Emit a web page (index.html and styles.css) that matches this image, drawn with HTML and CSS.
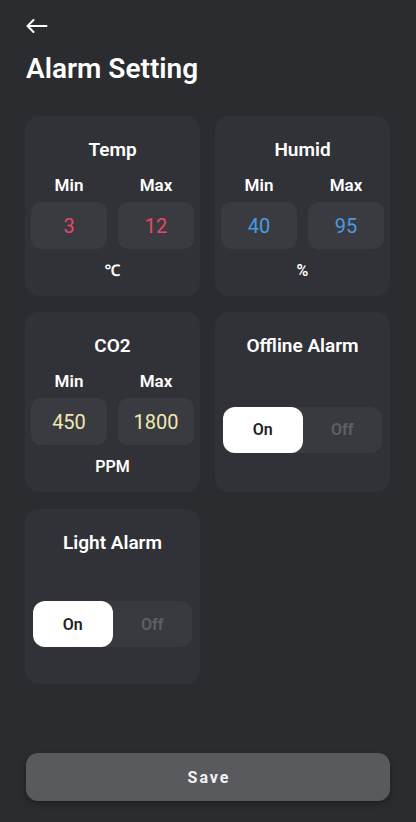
FILE: index.html
```html
<!DOCTYPE html>
<html lang="en">
<head>
<meta charset="utf-8">
<meta name="viewport" content="width=device-width, initial-scale=1">
<title>Alarm Setting</title>
<link rel="stylesheet" href="styles.css">
</head>
<body>
<div class="page">
  <div class="topbar">
    <svg class="back" width="22" height="14" viewBox="0 0 22 14" aria-hidden="true">
      <path d="M1.5 7H20.5M7.5 1L1.5 7L7.5 13" fill="none" stroke="#ffffff" stroke-width="2" stroke-linecap="round" stroke-linejoin="round"/>
    </svg>
  </div>
  <h1 class="title">Alarm Setting</h1>

  <div class="grid">
    <section class="card">
      <h2 class="card-title">Temp</h2>
      <div class="range">
        <span class="label">Min</span>
        <span class="label">Max</span>
        <div class="value red">3</div>
        <div class="value red">12</div>
      </div>
      <div class="unit">℃</div>
    </section>

    <section class="card">
      <h2 class="card-title">Humid</h2>
      <div class="range">
        <span class="label">Min</span>
        <span class="label">Max</span>
        <div class="value blue">40</div>
        <div class="value blue">95</div>
      </div>
      <div class="unit">%</div>
    </section>

    <section class="card">
      <h2 class="card-title">CO2</h2>
      <div class="range">
        <span class="label">Min</span>
        <span class="label">Max</span>
        <div class="value cream">450</div>
        <div class="value cream">1800</div>
      </div>
      <div class="unit">PPM</div>
    </section>

    <section class="card card-toggle">
      <h2 class="card-title">Offline Alarm</h2>
      <div class="toggle-wrap">
        <div class="toggle">
          <span class="opt active">On</span>
          <span class="opt">Off</span>
        </div>
      </div>
    </section>

    <section class="card card-toggle card-last">
      <h2 class="card-title">Light Alarm</h2>
      <div class="toggle-wrap">
        <div class="toggle">
          <span class="opt active">On</span>
          <span class="opt">Off</span>
        </div>
      </div>
    </section>
  </div>

  <button class="save" type="button">Save</button>
</div>
</body>
</html>
```
FILE: styles.css
```css
* {
  box-sizing: border-box;
}

html, body {
  margin: 0;
  padding: 0;
}

body {
  background: #2a2c30;
  color: #ffffff;
  font-family: Roboto, "Noto Sans", "Liberation Sans", sans-serif;
}

.page {
  display: flex;
  flex-direction: column;
  min-height: 100vh;
  padding: 0 26px 21px 25px;
}

.topbar {
  padding-top: 19px;
  height: 33px;
  padding-left: 1px;
}

.back {
  display: block;
}

.title {
  margin: 20px 0 0 1px;
  font-size: 28px;
  line-height: 32px;
  font-weight: 600;
}

.grid {
  margin-top: 31px;
  display: grid;
  grid-template-columns: 175px 175px;
  column-gap: 15px;
  row-gap: 16px;
}

.card {
  background: #313237;
  border-radius: 14px;
  padding: 20px 6px 15px;
  display: flex;
  flex-direction: column;
}

.card-last {
  margin-top: 1px;
}

.card-title {
  margin: 0;
  font-size: 19px;
  line-height: 28px;
  font-weight: 600;
  text-align: center;
}

.range {
  margin-top: 10px;
  display: grid;
  grid-template-columns: 1fr 1fr;
  column-gap: 11px;
  row-gap: 6px;
}

.label {
  font-size: 17px;
  line-height: 22px;
  font-weight: 600;
  text-align: center;
}

.value {
  height: 47px;
  background: #3a3b40;
  border-radius: 10px;
  display: flex;
  align-items: center;
  justify-content: center;
  font-size: 20px;
  font-weight: 400;
}

.red { color: #e5486c; }
.blue { color: #4a9ae0; }
.cream { color: #f1e8b4; }

.unit {
  margin-top: 12px;
  font-size: 16px;
  line-height: 20px;
  font-weight: 600;
  text-align: center;
}

.card-toggle {
  min-height: 175px;
  padding: 20px 8px 0;
}

.toggle-wrap {
  flex: 1;
  display: flex;
  align-items: center;
  padding-top: 7px;
}

.toggle {
  width: 159px;
  height: 46px;
  background: #393a3f;
  border-radius: 12px;
  display: flex;
}

.opt {
  flex: 1;
  display: flex;
  align-items: center;
  justify-content: center;
  font-size: 16px;
  font-weight: 600;
  color: #5d6066;
  border-radius: 12px;
}

.opt.active {
  background: #ffffff;
  color: #1e1f22;
}

.save {
  margin-top: auto;
  margin-left: 1px;
  width: 364px;
  height: 48px;
  border: none;
  border-radius: 12px;
  background: #595a5e;
  color: #f2f2f2;
  font-family: Roboto, "Noto Sans", "Liberation Sans", sans-serif;
  font-size: 16px;
  font-weight: 700;
  letter-spacing: 2px;
  padding: 0 0 0 2px;
  box-shadow: 0 3px 6px rgba(0, 0, 0, 0.3);
}
```
